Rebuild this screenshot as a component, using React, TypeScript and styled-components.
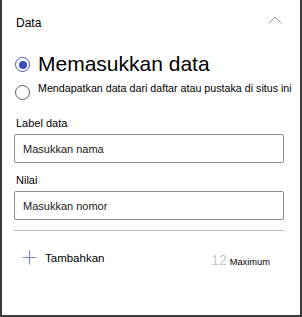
import styled, { createGlobalStyle } from 'styled-components';

const Global = createGlobalStyle`
  body {
    margin: 0;
    font-family: "Liberation Sans", Arial, sans-serif;
    color: #000;
    background: #fff;
  }
`

const Panel = styled.div`
  width: 302px;
  height: 317px;
  box-sizing: border-box;
  border: 2px solid #3b3b3b;
  border-top: none;
  padding: 0 16px 0 12px;
  display: flex;
  flex-direction: column;
`

const Header = styled.div`
  display: flex;
  align-items: flex-start;
  justify-content: space-between;
  padding-top: 15px;
  height: 37px;
  box-sizing: border-box;
`

const Title = styled.span`
  font-size: 12px;
  line-height: 16px;
  margin-left: 2px;
`

const Chevron = styled.svg`
  width: 14px;
  height: 8px;
  margin-top: 1px;
  margin-right: 2px;
`

const RadioRow = styled.label<{ $top: number; $dot: number }>`
  display: flex;
  align-items: flex-start;
  gap: 8px;
  margin-top: ${p => p.$top}px;
  margin-left: 1px;

  & > span:first-child {
    margin-top: ${p => p.$dot}px;
  }
`

const Circle = styled.span<{ $on?: boolean }>`
  width: 15px;
  height: 15px;
  flex: none;
  box-sizing: border-box;
  border-radius: 50%;
  border: ${p => (p.$on ? '1.5px solid #4656c0' : '1px solid #5a5a5a')};
  display: flex;
  align-items: center;
  justify-content: center;

  &::after {
    content: '';
    display: ${p => (p.$on ? 'block' : 'none')};
    width: 8px;
    height: 8px;
    border-radius: 50%;
    background: #3a4cc0;
  }
`

const RadioText = styled.span<{ $big?: boolean }>`
  font-size: ${p => (p.$big ? '21px' : '10.7px')};
  line-height: ${p => (p.$big ? '24px' : '14px')};
  white-space: nowrap;
`

const FieldLabel = styled.div<{ $top: number }>`
  font-size: 11px;
  line-height: 14px;
  margin: ${p => p.$top}px 0 4px 2px;
`

const Input = styled.input`
  display: block;
  width: 270px;
  height: 29px;
  box-sizing: border-box;
  border: 1px solid #8c8c8c;
  border-radius: 2px;
  padding: 0 8px;
  font-family: "Liberation Sans", Arial, sans-serif;
  font-size: 11px;
  color: #000;
  outline: none;

  &::placeholder {
    color: #1a1a1a;
  }
`

const Divider = styled.hr`
  width: 270px;
  margin: 10px 0 0;
  border: none;
  border-top: 1px solid #bdbdbd;
`

const AddRow = styled.div`
  display: flex;
  align-items: center;
  margin-top: 16px;
  padding-left: 8px;
  width: 270px;
  box-sizing: border-box;
  padding-right: 14px;
`

const AddButton = styled.button`
  display: flex;
  align-items: center;
  gap: 8px;
  border: none;
  background: none;
  padding: 0;
  font-family: "Liberation Sans", Arial, sans-serif;
  font-size: 11.5px;
  color: #000;
`

const Limit = styled.div`
  margin-left: auto;
  display: flex;
  align-items: baseline;
  gap: 3px;
  margin-top: 5px;
`

const Count = styled.span`
  font-size: 14px;
  color: #c8c8c8;
`

const Small = styled.span`
  font-size: 9.3px;
`

export default function App() {
  return (
    <>
      <Global />
      <Panel>
        <Header>
          <Title>Data</Title>
          <Chevron viewBox="0 0 14 8">
            <path d="M0.5 7.5 L7 1 L13.5 7.5" fill="none" stroke="#9a9a9a" strokeWidth="1" />
          </Chevron>
        </Header>
        <RadioRow $top={15} $dot={5}>
          <Circle $on />
          <RadioText $big>Memasukkan data</RadioText>
        </RadioRow>
        <RadioRow $top={5} $dot={4}>
          <Circle />
          <RadioText>Mendapatkan data dari daftar atau pustaka di situs ini</RadioText>
        </RadioRow>
        <FieldLabel $top={16}>Label data</FieldLabel>
        <Input placeholder="Masukkan nama" />
        <FieldLabel $top={10}>Nilai</FieldLabel>
        <Input placeholder="Masukkan nomor" />
        <Divider />
        <AddRow>
          <AddButton>
            <svg width="15" height="15" viewBox="0 0 15 15">
              <path d="M7.5 0.5 V14.5 M0.5 7.5 H14.5" stroke="#7f8bc6" strokeWidth="1.2" />
            </svg>
            Tambahkan
          </AddButton>
          <Limit>
            <Count>12</Count>
            <Small>Maximum</Small>
          </Limit>
        </AddRow>
      </Panel>
    </>
  )
}
